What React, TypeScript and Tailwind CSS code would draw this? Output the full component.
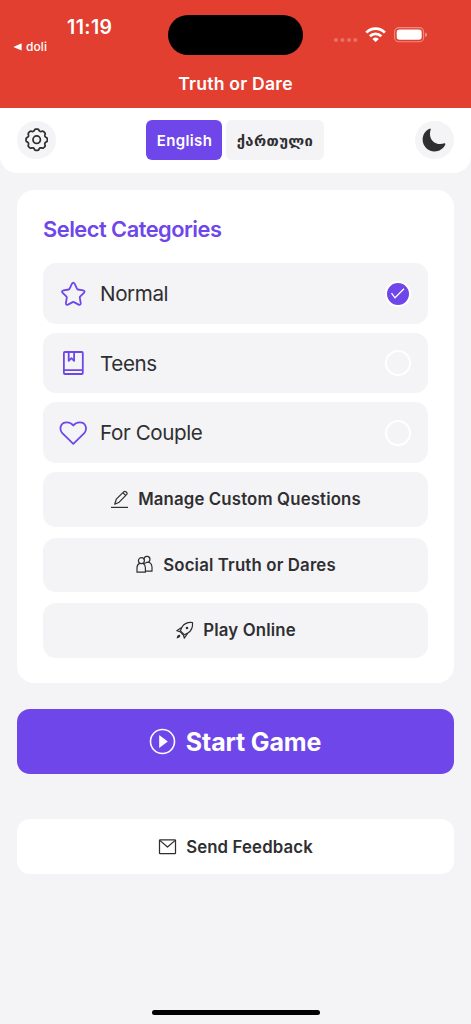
import type { ReactNode } from "react";
import { IoMoon } from "react-icons/io5";

const polar = (r: number, deg: number): [number, number] => {
  const a = (deg * Math.PI) / 180;
  return [12 + r * Math.sin(a), 12 - r * Math.cos(a)];
};

const gearPath =
  Array.from({ length: 120 }, (_, i) => {
    const deg = i * 3;
    const r = 10 + 0.95 * Math.tanh(1.8 * Math.cos((8 * deg * Math.PI) / 180) + 0.6);
    const [x, y] = polar(r, deg);
    return `${i ? "L" : "M"}${x.toFixed(2)} ${y.toFixed(2)}`;
  }).join("") + "Z";

function GearIcon() {
  return (
    <svg className="h-[23.4px] w-[23.4px]" viewBox="0 0 24 24" fill="none" stroke="currentColor" strokeWidth="1.8" strokeLinejoin="round">
      <path d={gearPath} />
      <circle cx="12" cy="12" r="3.8" />
    </svg>
  );
}

function StarIcon() {
  return (
    <svg className="h-7 w-7" viewBox="0 0 28 28" fill="none" stroke="currentColor" strokeWidth="1.8" strokeLinejoin="round">
      <path d="M12.9 3.8Q14.3 1.6 15.7 3.8L18.1 8.9Q18.3 9.4 18.9 9.5L24.1 10.3Q26.6 11 24.9 12.9L21.1 16.7Q20.7 17.1 20.8 17.7L21.7 23.1Q21.8 25.4 19.6 24.6L14.9 22.1Q14.3 21.8 13.7 22.1L9 24.6Q6.8 25.4 6.9 23.1L7.8 17.7Q7.9 17.1 7.5 16.7L3.7 12.9Q2 11 4.5 10.3L9.7 9.5Q10.3 9.4 10.5 8.9Z" />
    </svg>
  );
}

function BookIcon() {
  return (
    <svg className="h-7 w-7" viewBox="0 0 28 28" fill="none" stroke="currentColor" strokeWidth="1.8" strokeLinejoin="round">
      <rect x="4.9" y="3" width="18.9" height="22" rx="1" />
      <path d="M4.9 21.2H23.8M9.7 3V11.8L12.4 9.2L15.1 11.8V3" />
    </svg>
  );
}

function HeartIcon() {
  return (
    <svg className="h-7 w-7" viewBox="0 0 28 28" fill="none" stroke="currentColor" strokeWidth="1.8" strokeLinejoin="round">
      <path d="M14.3 24.8L3.3 14.2C-0.3 10 1.6 3.3 7.8 3.3C10.7 3.3 12.9 4.6 14.3 6.6C15.7 4.6 17.9 3.3 20.8 3.3C27 3.3 28.6 10 25.3 14.2Z" />
    </svg>
  );
}

const lineIcon = "h-[19px] w-[19px] shrink-0";

function EditIcon() {
  return (
    <svg className={lineIcon} viewBox="0 0 19 19" fill="none" stroke="currentColor" strokeWidth="1.2" strokeLinejoin="round">
      <path d="M1 17.4H18" />
      <path d="M4.7 14.2L6.3 9.2L13.9 1.6Q14.8 0.9 15.8 1.7L16.7 2.5Q17.6 3.4 16.8 4.4L9.2 12.2ZM12.9 2.7L15.6 5.5" />
    </svg>
  );
}

function PeopleIcon() {
  return (
    <svg className={lineIcon} viewBox="0 0 19 19" fill="none" stroke="currentColor" strokeWidth="1.2" strokeLinejoin="round" strokeLinecap="round">
      <circle cx="6.4" cy="5.7" r="3" />
      <path d="M9 3.8A3 3 0 1 1 11.6 7.4" />
      <path d="M4.6 8.4C2.8 9.3 2 10.9 2 12.8V17.2H10.4V12.8C10.4 10.9 9.8 9.3 8.2 8.4" />
      <path d="M9.4 9C10 8.2 10.6 7.8 11.4 7.5M14.3 7.3C16.2 8.5 17 10 17 12V16.2H10.6" />
    </svg>
  );
}

function RocketIcon() {
  return (
    <svg className={lineIcon} viewBox="0 0 19 19" fill="none" stroke="currentColor" strokeWidth="1.2" strokeLinejoin="round">
      <path d="M17.5 1.5C12.8 1 9.2 2.5 6.9 6.2L5.4 9.8L9.3 13.7L12.8 12.1C16.5 9.8 18 6.2 17.5 1.5Z" />
      <path d="M6.9 6.2L1.8 9.7L5 10.6L8.4 14L9.3 17.2L12.8 12.1" />
      <circle cx="12" cy="7" r="0.7" fill="currentColor" />
      <path d="M4.5 13.7Q1.8 14 1.7 17.4Q5 17.2 5.4 14.6Z" fill="currentColor" stroke="none" />
    </svg>
  );
}

function MailIcon() {
  return (
    <svg className={lineIcon} viewBox="0 0 19 19" fill="none" stroke="currentColor" strokeWidth="1.25" strokeLinejoin="round">
      <rect x="1.5" y="2.9" width="16" height="13.6" rx="0.6" />
      <path d="M1.8 3.4L9.5 10L17.2 3.4" />
    </svg>
  );
}

function PlayIcon() {
  return (
    <svg className="h-[27px] w-[27px] shrink-0" viewBox="0 0 27 27" fill="none" stroke="currentColor" strokeWidth="1.6">
      <circle cx="13.5" cy="13.5" r="12" />
      <path d="M10.2 7V20L18.8 13.5Z" fill="currentColor" stroke="none" />
    </svg>
  );
}

function StatusIcons() {
  return (
    <svg className="h-5 w-[96px]" viewBox="0 0 96 20" fill="none">
      <g fill="#fff" fillOpacity="0.25">
        <circle cx="5" cy="15" r="2.1" />
        <circle cx="11.5" cy="15" r="2.1" />
        <circle cx="18" cy="15" r="2.1" />
        <circle cx="24.3" cy="15" r="2.1" />
      </g>
      <g stroke="#fff" strokeWidth="2.7">
        <path d="M35.3 7.6A13 13 0 0 1 53.9 7.6" />
        <path d="M38.9 11.3A8 8 0 0 1 50.3 11.3" />
      </g>
      <path d="M41.4 13.9Q44.6 11.3 47.8 13.9L44.6 17.1Z" fill="#fff" />
      <rect x="63.6" y="2.6" width="29" height="14.2" rx="4.4" stroke="#fff" strokeOpacity="0.4" strokeWidth="1.1" />
      <rect x="65.7" y="4.6" width="25" height="10.2" rx="2.8" fill="#fff" />
      <path d="M94.2 7.4Q96 8.2 96 9.7Q96 11.2 94.2 12Z" fill="#fff" fillOpacity="0.5" />
    </svg>
  );
}

function Category({ icon, label, selected }: { icon: ReactNode; label: string; selected?: boolean }) {
  return (
    <div className="flex h-[60.6px] items-center rounded-[13px] bg-[#f4f4f7] pr-[17px] pl-4 text-[#6e46e9]">
      {icon}
      <span className="ml-[13px] flex-1 pt-[2px] text-[20.6px] tracking-[-0.42px] text-[#2f2f31]">{label}</span>
      {selected ? (
        <span className="flex size-[26px] items-center justify-center rounded-full border-2 border-white bg-[#6e46e9] text-white">
          <svg className="size-4" viewBox="0 0 16 16" fill="none" stroke="currentColor" strokeWidth="1.3">
            <path d="M1.5 7.2L5 11.8L14 2.8" />
          </svg>
        </span>
      ) : (
        <span className="size-[26px] rounded-full border-2 border-white" />
      )}
    </div>
  );
}

function Action({ icon, label }: { icon: ReactNode; label: string }) {
  return (
    <div className="flex h-[54.6px] items-center justify-center gap-[9px] rounded-[13px] bg-[#f4f4f7] text-[16.8px] font-semibold tracking-[0.15px]">
      {icon}
      <span className="pt-px">{label}</span>
    </div>
  );
}

export default function App() {
  return (
    <div className="flex h-[1024px] w-[471px] flex-col overflow-hidden bg-[#f4f4f7] font-['Inter','DejaVu_Sans',sans-serif] text-[#2f2f31]">
      <header className="h-[107.6px] shrink-0 bg-[#e23f31] text-white">
        <div className="grid h-[69.4px] grid-cols-[168px_135px_1fr]">
          <div className="pt-[15.4px]">
            <div className="pl-[67px] text-[19.5px] leading-6 font-semibold tracking-[0.4px]">11:19</div>
            <div className="flex items-center gap-1 pl-[13px] text-xs leading-4 font-medium tracking-[0.1px]">
              <svg className="h-2 w-[9px]" viewBox="0 0 9 8" fill="currentColor">
                <path d="M8.6 0.2V7.6L0.4 3.9Z" />
              </svg>
              doli
            </div>
          </div>
          <div className="mt-[15px] h-[39.5px] rounded-full bg-black" />
          <div className="pt-[25px] pl-7">
            <StatusIcons />
          </div>
        </div>
        <h1 className="text-center text-[17.6px] leading-[30px] font-semibold tracking-[0.22px]">Truth or Dare</h1>
      </header>

      <nav className="flex h-[65px] shrink-0 items-center justify-between rounded-b-[17px] bg-white px-[17.3px]">
        <button className="flex size-[38.6px] items-center justify-center rounded-full bg-[#f4f4f7]">
          <GearIcon />
        </button>
        <div className="mr-px flex gap-1 text-[15px] font-semibold">
          <button className="h-[39.6px] w-[76px] rounded-md bg-[#6e46e9] pt-[2px] pl-px tracking-[0.38px] text-white">English</button>
          <button className="h-[39.6px] w-[98px] rounded-md bg-[#f4f4f7] pt-px font-['DejaVu_Sans',sans-serif] text-[14.8px] font-bold tracking-[0.4px]">ქართული</button>
        </div>
        <button className="flex size-[38.6px] items-center justify-center rounded-full bg-[#f4f4f7]">
          <IoMoon className="size-[26px]" />
        </button>
      </nav>

      <main className="flex flex-col px-[17.4px] pt-[17.9px]">
        <section className="h-[493px] rounded-[17px] bg-white px-[25.7px] pt-[23px]">
          <h2 className="mb-[16.8px] text-[21.8px] leading-[33px] font-semibold tracking-[-0.5px] text-[#6e46e9]">Select Categories</h2>
          <div className="flex flex-col gap-[9px]">
            <Category icon={<StarIcon />} label="Normal" selected />
            <Category icon={<BookIcon />} label="Teens" />
            <Category icon={<HeartIcon />} label="For Couple" />
          </div>
          <div className="mt-[9px] flex flex-col gap-[11px]">
            <Action icon={<EditIcon />} label="Manage Custom Questions" />
            <Action icon={<PeopleIcon />} label="Social Truth or Dares" />
            <Action icon={<RocketIcon />} label="Play Online" />
          </div>
        </section>

        <button className="mt-[26px] flex h-[64.6px] items-center justify-center gap-[10px] rounded-[13px] bg-[#6e46e9] pr-px text-[25px] font-bold tracking-[-0.16px] text-white">
          <PlayIcon />
          <span className="pt-px">Start Game</span>
        </button>

        <button className="mt-[45px] flex h-[54.6px] items-center justify-center gap-[9px] rounded-[13px] bg-white text-[16.8px] font-semibold tracking-[0.13px]">
          <MailIcon />
          <span className="pt-[2px]">Send Feedback</span>
        </button>
      </main>

      <div className="mx-auto mt-auto mb-[9px] h-[5.4px] w-[168px] shrink-0 rounded-full bg-black" />
    </div>
  );
}
